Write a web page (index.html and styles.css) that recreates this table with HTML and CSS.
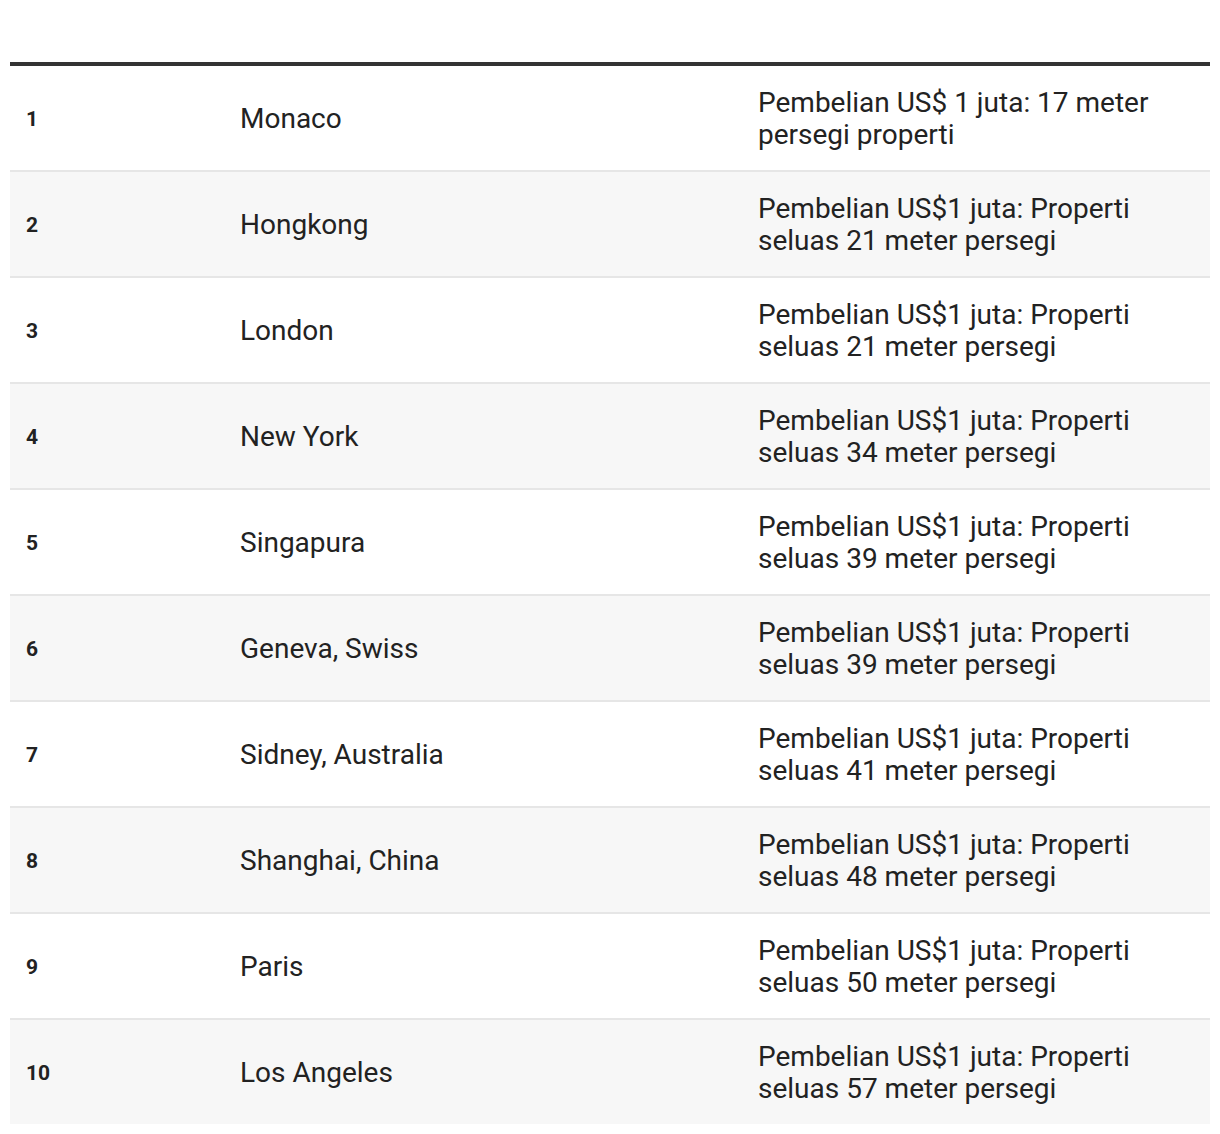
FILE: index.html
```html
<!DOCTYPE html>
<html lang="id">
<head>
<meta charset="utf-8">
<title>Kota termahal</title>
<link rel="stylesheet" href="styles.css">
</head>
<body>
<table class="ranking">
  <colgroup>
    <col class="col-rank">
    <col class="col-city">
    <col class="col-desc">
  </colgroup>
  <tbody>
    <tr><td class="rank">1</td><td class="city">Monaco</td><td class="desc">Pembelian US$ 1 juta: 17 meter persegi properti</td></tr>
    <tr><td class="rank">2</td><td class="city">Hongkong</td><td class="desc">Pembelian US$1 juta: Properti seluas 21 meter persegi</td></tr>
    <tr><td class="rank">3</td><td class="city">London</td><td class="desc">Pembelian US$1 juta: Properti seluas 21 meter persegi</td></tr>
    <tr><td class="rank">4</td><td class="city">New York</td><td class="desc">Pembelian US$1 juta: Properti seluas 34 meter persegi</td></tr>
    <tr><td class="rank">5</td><td class="city">Singapura</td><td class="desc">Pembelian US$1 juta: Properti seluas 39 meter persegi</td></tr>
    <tr><td class="rank">6</td><td class="city">Geneva, Swiss</td><td class="desc">Pembelian US$1 juta: Properti seluas 39 meter persegi</td></tr>
    <tr><td class="rank">7</td><td class="city">Sidney, Australia</td><td class="desc">Pembelian US$1 juta: Properti seluas 41 meter persegi</td></tr>
    <tr><td class="rank">8</td><td class="city">Shanghai, China</td><td class="desc">Pembelian US$1 juta: Properti seluas 48 meter persegi</td></tr>
    <tr><td class="rank">9</td><td class="city">Paris</td><td class="desc">Pembelian US$1 juta: Properti seluas 50 meter persegi</td></tr>
    <tr><td class="rank">10</td><td class="city">Los Angeles</td><td class="desc">Pembelian US$1 juta: Properti seluas 57 meter persegi</td></tr>
  </tbody>
</table>
</body>
</html>
```
FILE: styles.css
```css
html, body {
  margin: 0;
  padding: 0;
  background: #ffffff;
}

body {
  padding: 62px 10px 10px 10px;
  font-family: Roboto, "Liberation Sans", Arial, sans-serif;
  color: #222222;
}

.ranking {
  width: 1200px;
  border-collapse: collapse;
  table-layout: fixed;
  border-top: 4px solid #333333;
}

.col-rank { width: 214px; }
.col-city { width: 518px; }
.col-desc { width: 468px; }

.ranking tr {
  border-bottom: 2px solid #e6e6e6;
}

.ranking tr:last-child {
  border-bottom: none;
}

.ranking tr:nth-child(even) {
  background: #f7f7f7;
}

.ranking td {
  padding: 21px 16px 19px 16px;
  height: 64px;
  vertical-align: middle;
  line-height: 32px;
  font-size: 28px;
  box-sizing: content-box;
}

.ranking td.rank {
  font-size: 21px;
  font-weight: 700;
}
```
